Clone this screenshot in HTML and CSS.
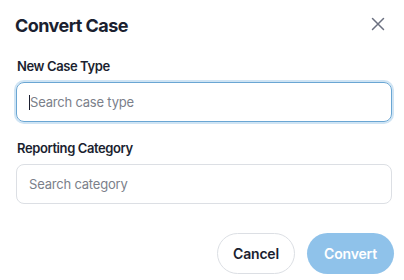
FILE: index.html
```html
<!DOCTYPE html>
<html>
<head>
<meta charset="utf-8">
<link rel="stylesheet" href="styles.css">
</head>
<body>
<div class="dialog">
  <div class="header">
    <h1 class="title">Convert Case</h1>
    <button class="close" aria-label="Close">
      <svg width="14" height="14" viewBox="0 0 14 14"><path d="M1.5 1.5 L12.5 12.5 M12.5 1.5 L1.5 12.5" stroke="#6b7080" stroke-width="1.5" stroke-linecap="round" fill="none"/></svg>
    </button>
  </div>
  <div class="field">
    <label class="label">New Case Type</label>
    <div class="input focused"><span class="caret"></span><span class="ph">Search case type</span></div>
  </div>
  <div class="field">
    <label class="label">Reporting Category</label>
    <div class="input"><span class="ph">Search category</span></div>
  </div>
  <div class="actions">
    <button class="btn cancel">Cancel</button>
    <button class="btn convert">Convert</button>
  </div>
</div>
</body>
</html>
```
FILE: styles.css
```css
html, body { margin: 0; padding: 0; background: #fff; }
body { font-family: Inter, "Liberation Sans", sans-serif; color: #1b1f30; }
.dialog { width: 404px; height: 280px; box-sizing: border-box; padding: 14px 12px 0 16px; }
.header { display: flex; justify-content: space-between; align-items: center; height: 24px; margin-left: -1px; }
.title { margin: 0; font-size: 18px; font-weight: 700; letter-spacing: -0.55px; line-height: 24px; }
.close { background: none; border: 0; padding: 0; margin-right: 7px; margin-top: -4px; width: 14px; height: 14px; display: flex; }
.field { display: flex; flex-direction: column; }
.label { font-size: 13px; font-weight: 600; line-height: 16px; margin-top: 20px; margin-bottom: 8px; margin-left: 1px; letter-spacing: -0.4px; }
.field + .field .label { margin-top: 18px; }
.input { box-sizing: border-box; height: 40px; width: 376px; border: 1px solid #dcdfe4; border-radius: 8px; display: flex; align-items: center; padding-left: 12px; font-size: 13px; color: #7b808a; letter-spacing: -0.2px; }
.input.focused { border-color: #6aa6d3; box-shadow: 0 0 0 2px #cfe4f4; }
.caret { width: 1px; height: 15px; background: #1b1f30; }
.actions { display: flex; justify-content: flex-end; gap: 12px; margin-top: 29px; margin-right: -2px; }
.btn { font-family: inherit; font-size: 14px; font-weight: 600; height: 41px; border-radius: 21px; cursor: pointer; letter-spacing: -0.2px; }
.cancel { width: 78px; background: #fff; border: 1px solid #dcdfe4; color: #1b1f30; }
.convert { width: 87px; background: #8fc2ea; border: 0; color: #fff; }
```
